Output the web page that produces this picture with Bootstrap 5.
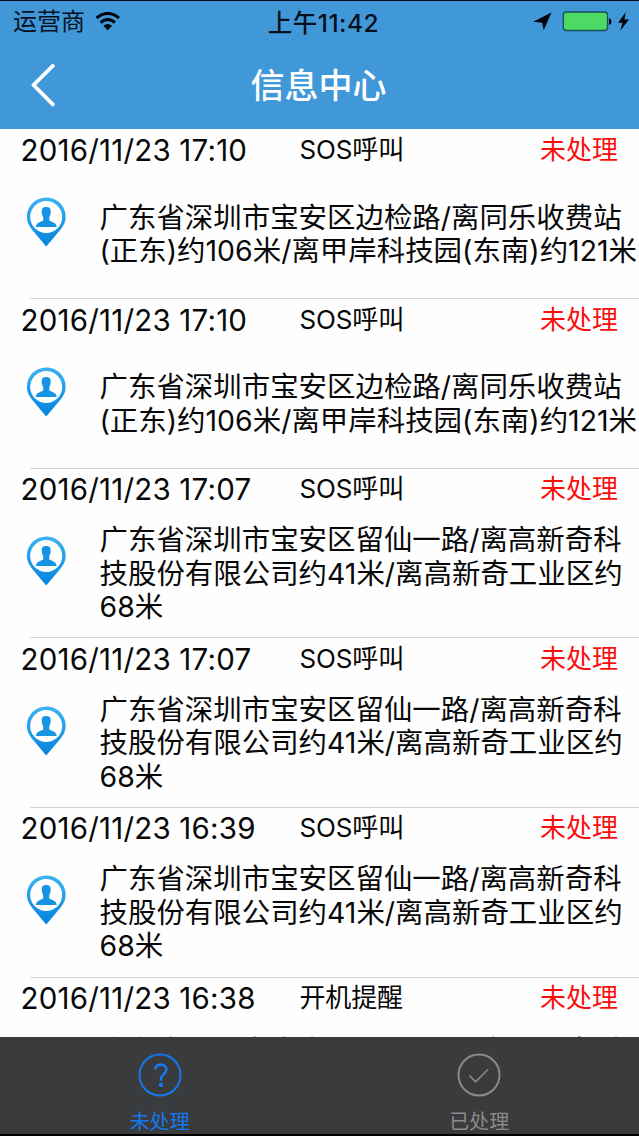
<!DOCTYPE html>
<html lang="zh-CN">
<head>
<meta charset="utf-8">
<meta name="viewport" content="width=device-width, initial-scale=1">
<title>信息中心</title>
<link href="https://cdn.jsdelivr.net/npm/bootstrap@5.3.0/dist/css/bootstrap.min.css" rel="stylesheet">
<style>
  body { font-family: Inter, "Noto Sans CJK SC", sans-serif; color: #080808; }
  .app { height: 1136px; background: #fefefe; }
  .topbar { height: 128.600px; background: #4098d8; border-top: 1px solid #0a0c1c; }
  .status { height: 42px; color: #06101c; padding: 0 9px 0 13px; }
  .status-side { width: 200px; }
  .carrier { font-size: 24px; line-height: 42px; }
  .clock { font-size: 24.500px; font-weight: 500; line-height: 42px; letter-spacing: .5px; margin-left: 4px; padding-top: 1px; }
  .title-row { height: 86px; }
  .page-title { font-size: 34px; font-weight: 500; line-height: 86px; }
  .side { width: 100px; padding-left: 31px; }
  .side-end { width: 102px; }
  .entry { height: 169.600px; }
  .entry + .entry .rule { background: #d4d4d8; }
  .rule { height: 1px; margin-left: 30px; }
  .head { height: 40px; padding: .5px 21px 0 20.500px; line-height: 40px; font-size: 26px; white-space: nowrap; }
  .date { width: 279px; font-size: 29.500px; letter-spacing: .2px; }
  .kind { letter-spacing: -.15px; }
  .state { color: #fb0d0d; }
  .detail { height: 128px; padding-left: 26px; padding-top: 1px; }
  .pin { width: 73.500px; margin-bottom: 24px; }
  .addr { font-size: 28.450px; line-height: 33.400px; white-space: nowrap; }
  .last-entry .detail { padding-top: 16px; }
  .tabs-bottom { height: 99px; background: #3a3b3c; border-bottom: 2px solid #000; }
  .tab { color: #8a8a8a; font-size: 20px; line-height: 24px; padding-top: 16px; }
  .tab.on { color: #1479ee; }
  .tab svg { margin-bottom: 12.500px; }
</style>
<script src="https://cdn.jsdelivr.net/npm/bootstrap@5.3.0/dist/js/bootstrap.bundle.min.js"></script>
</head>
<body>
<svg width="0" height="0" class="position-absolute" aria-hidden="true">
  <defs>
    <linearGradient id="pinFill" x1="0" y1="0" x2="0" y2="1">
      <stop offset="0" stop-color="#3bb4f2"/><stop offset="1" stop-color="#0583dc"/>
    </linearGradient>
    <symbol id="pin" viewBox="0 0 40 50">
      <path fill="url(#pinFill)" d="M20.200.5C9.400.5.9 9 .9 19.800c0 6 2.600 9.700 5.600 13.400L20.200 49.500 34 33.200c3-3.700 5.600-7.400 5.600-13.400C39.600 9 31 .5 20.200.5z"/>
      <circle cx="20.200" cy="20" r="16" fill="#fefefe"/>
      <path fill="#1793e4" d="M20.200 10c3.300 0 4.500 1.500 4.500 4.200 0 3-.7 4.300-1.400 6v3.200c2.300 1.700 7.200 1.800 7.400 6.600H9.900c.2-4.800 5-4.900 7.300-6.600v-3.200c-.7-1.700-1.500-3-1.500-6 0-2.700 1.200-4.200 4.500-4.200z"/>
    </symbol>
  </defs>
</svg>
<div class="app d-flex flex-column overflow-hidden">
  <header class="topbar flex-shrink-0">
    <div class="status d-flex justify-content-between align-items-center">
      <div class="status-side d-flex align-items-center">
        <span class="carrier">运营商</span>
        <svg class="ms-1" width="34" height="20" viewBox="-2 .5 34 20" fill="none" stroke="#02060c" stroke-width="3">
          <path d="M5.500 6.500Q16.700-2.700 28 6.500M9.500 11Q16.700 4.800 24 11"/>
          <path fill="#02060c" stroke="none" d="M12.300 14.200q4.400-3.600 8.800 0l-4.400 4.600z"/>
        </svg>
      </div>
      <span class="clock">上午11:42</span>
      <div class="status-side d-flex justify-content-end align-items-center">
        <svg width="98" height="24" viewBox="532 10 98 24">
          <path d="M551.500 12.500l-7.800 17.800-1.500-7.500-9-1z" fill="#02060c"/>
          <rect x="563.300" y="12" width="44.200" height="18.500" rx="3" fill="#4cd964" stroke="#174f58" stroke-width="1.300"/>
          <path d="M609 18.300c3.300.6 3.300 6 0 6.700z" fill="#02060c"/>
          <path d="M625.800 12l-7.700 10.700h4.400l-2.200 8.100 8.700-11.200h-4.500z" fill="#02060c"/>
        </svg>
      </div>
    </div>
    <div class="title-row d-flex justify-content-between align-items-center">
      <a class="side" href="#" aria-label="返回">
        <svg class="d-block" width="26" height="44" viewBox="0 1 26 44" fill="none" stroke="#fff" stroke-width="3.800" stroke-linecap="round" stroke-linejoin="round"><path d="M21.800 2.900L2.500 22l19.300 19.400"/></svg>
      </a>
      <h1 class="page-title text-white m-0">信息中心</h1>
      <div class="side-end"></div>
    </div>
  </header>

  <main class="flex-grow-1 overflow-hidden">
    <article class="entry">
      <div class="rule"></div>
      <div class="head d-flex"><span class="date">2016/11/23 17:10</span><span class="kind">SOS呼叫</span><span class="state ms-auto">未处理</span></div>
      <div class="detail d-flex align-items-center">
        <div class="pin"><svg class="d-block" width="40" height="50"><use href="#pin"/></svg></div>
        <div class="addr">广东省深圳市宝安区边检路/离同乐收费站<br>(正东)约106米/离甲岸科技园(东南)约121米</div>
      </div>
    </article>
    <article class="entry">
      <div class="rule"></div>
      <div class="head d-flex"><span class="date">2016/11/23 17:10</span><span class="kind">SOS呼叫</span><span class="state ms-auto">未处理</span></div>
      <div class="detail d-flex align-items-center">
        <div class="pin"><svg class="d-block" width="40" height="50"><use href="#pin"/></svg></div>
        <div class="addr">广东省深圳市宝安区边检路/离同乐收费站<br>(正东)约106米/离甲岸科技园(东南)约121米</div>
      </div>
    </article>
    <article class="entry">
      <div class="rule"></div>
      <div class="head d-flex"><span class="date">2016/11/23 17:07</span><span class="kind">SOS呼叫</span><span class="state ms-auto">未处理</span></div>
      <div class="detail d-flex align-items-center">
        <div class="pin"><svg class="d-block" width="40" height="50"><use href="#pin"/></svg></div>
        <div class="addr">广东省深圳市宝安区留仙一路/离高新奇科<br>技股份有限公司约41米/离高新奇工业区约<br>68米</div>
      </div>
    </article>
    <article class="entry">
      <div class="rule"></div>
      <div class="head d-flex"><span class="date">2016/11/23 17:07</span><span class="kind">SOS呼叫</span><span class="state ms-auto">未处理</span></div>
      <div class="detail d-flex align-items-center">
        <div class="pin"><svg class="d-block" width="40" height="50"><use href="#pin"/></svg></div>
        <div class="addr">广东省深圳市宝安区留仙一路/离高新奇科<br>技股份有限公司约41米/离高新奇工业区约<br>68米</div>
      </div>
    </article>
    <article class="entry">
      <div class="rule"></div>
      <div class="head d-flex"><span class="date">2016/11/23 16:39</span><span class="kind">SOS呼叫</span><span class="state ms-auto">未处理</span></div>
      <div class="detail d-flex align-items-center">
        <div class="pin"><svg class="d-block" width="40" height="50"><use href="#pin"/></svg></div>
        <div class="addr">广东省深圳市宝安区留仙一路/离高新奇科<br>技股份有限公司约41米/离高新奇工业区约<br>68米</div>
      </div>
    </article>
    <article class="entry last-entry">
      <div class="rule"></div>
      <div class="head d-flex"><span class="date">2016/11/23 16:38</span><span class="kind">开机提醒</span><span class="state ms-auto">未处理</span></div>
      <div class="detail d-flex align-items-start">
        <div class="pin"></div>
        <div class="addr">广东省深圳市宝安区留仙一路/离高新奇科</div>
      </div>
    </article>
  </main>

  <nav class="tabs-bottom d-flex flex-shrink-0">
    <div class="tab on w-50 d-flex flex-column align-items-center">
      <svg class="d-block" width="44" height="44" viewBox="0 0 44 44" fill="none" stroke="currentColor" stroke-width="2">
        <circle cx="22" cy="22" r="20.500"/>
        <path stroke-width="2.600" d="M17.200 16.500c.3-3 2.400-4.900 5.600-4.900 3.400 0 5.600 2 5.600 5 0 4.800-5.500 4.500-5.500 9.700v1.500"/>
        <circle cx="22.900" cy="31.800" r="2.200" fill="currentColor" stroke="none"/>
      </svg>
      <span>未处理</span>
    </div>
    <div class="tab w-50 d-flex flex-column align-items-center">
      <svg class="d-block" width="44" height="44" viewBox="0 0 44 44" fill="none" stroke="currentColor" stroke-width="2">
        <circle cx="22" cy="22" r="20.500"/>
        <path stroke-width="1.600" d="M12.500 22.500l6 6.300 12.500-12.300"/>
      </svg>
      <span>已处理</span>
    </div>
  </nav>
</div>
</body>
</html>
